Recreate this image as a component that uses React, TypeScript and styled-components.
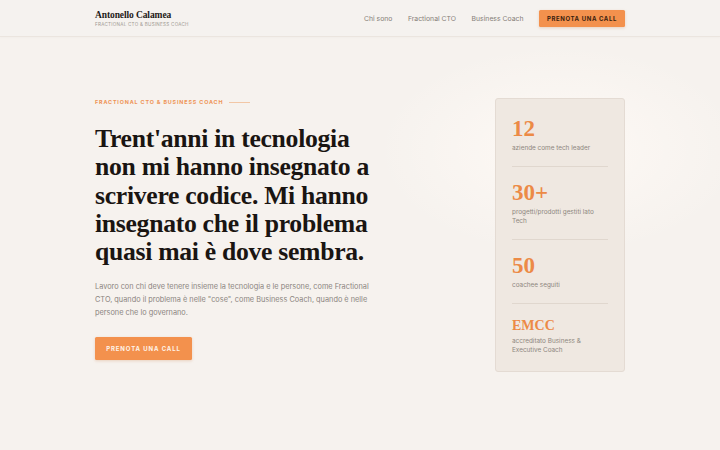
import React from "react";
import styled, { createGlobalStyle } from "styled-components";

const GlobalStyle = createGlobalStyle`
  html, body {
    margin: 0;
    padding: 0;
    background: #f6f2ee;
  }
  body {
    font-family: "Inter", "Liberation Sans", sans-serif;
    -webkit-font-smoothing: antialiased;
  }
`;

const Page = styled.div`
  width: 720px;
  height: 450px;
  overflow: hidden;
  background:
    radial-gradient(ellipse 260px 150px at 560px 150px, rgba(255, 250, 246, 0.9), rgba(255, 250, 246, 0) 70%),
    #f6f2ee;
`;

const NavBar = styled.header`
  height: 36px;
  border-bottom: 1px solid #ebe5df;
  background: #f5f2ef;
  box-shadow: 0 1px 2px rgba(0, 0, 0, 0.02);
`;

const Inner = styled.div`
  width: 530px;
  margin: 0 auto;
`;

const NavInner = styled(Inner)`
  height: 100%;
  display: flex;
  align-items: center;
  justify-content: space-between;
`;

const Brand = styled.div`
  display: flex;
  flex-direction: column;
  gap: 2px;
`;

const BrandName = styled.span`
  font-family: "Liberation Serif", serif;
  font-weight: 700;
  font-size: 9.5px;
  color: #1e1a17;
  letter-spacing: -0.1px;
`;

const BrandTag = styled.span`
  font-size: 4.6px;
  letter-spacing: 0.25px;
  color: #a19a93;
  text-transform: uppercase;
`;

const Links = styled.nav`
  display: flex;
  align-items: center;
  gap: 15.5px;
`;

const NavLink = styled.a`
  font-size: 6.85px;
  color: #857e78;
  text-decoration: none;
`;

const Cta = styled.a<{ $big?: boolean }>`
  display: flex;
  align-items: center;
  justify-content: center;
  background: #f3914d;
  color: ${(p) => (p.$big ? "#fff4ea" : "#3a210f")};
  font-size: 6px;
  font-weight: 700;
  letter-spacing: ${(p) => (p.$big ? "0.9px" : "0.6px")};
  text-transform: uppercase;
  text-decoration: none;
  border-radius: 1.5px;
  box-shadow: 0 1px 3px rgba(200, 110, 50, 0.25);
  width: ${(p) => (p.$big ? "97px" : "86px")};
  height: ${(p) => (p.$big ? "23px" : "17px")};
`;

const Hero = styled(Inner)`
  display: flex;
  justify-content: space-between;
  align-items: flex-start;
  padding-top: 61px;
`;

const Left = styled.div`
  display: flex;
  flex-direction: column;
  padding-top: 1px;
`;

const Eyebrow = styled.div`
  display: flex;
  align-items: center;
  gap: 6px;
  font-size: 5.4px;
  font-weight: 700;
  letter-spacing: 0.85px;
  color: #ee9457;
  text-transform: uppercase;
  &::after {
    content: "";
    width: 21px;
    height: 1px;
    background: #f2c7a6;
  }
`;

const Title = styled.h1`
  margin: 20px 0 0;
  font-family: "Liberation Serif", serif;
  font-weight: 700;
  font-size: 25.7px;
  line-height: 28.3px;
  letter-spacing: -0.3px;
  color: #1a1512;
`;

const Lead = styled.p`
  margin: 14px 0 0;
  width: 290px;
  font-size: 7.35px;
  line-height: 13px;
  color: #8b847e;
`;

const LeadButton = styled.div`
  margin-top: 18px;
`;

const StatsCard = styled.aside`
  width: 130px;
  box-sizing: border-box;
  padding: 18px 16px 16px;
  background: #efe8e1;
  border: 1px solid #e4dbd3;
  border-radius: 3px;
`;

const Stat = styled.div<{ $last?: boolean }>`
  padding: ${(p) => (p.$last ? "14px 0 0" : "0 0 13px")};
  & + & {
    border-top: 1px solid #e0d7ce;
    padding-top: ${(p) => (p.$last ? "14px" : "19px")};
  }
`;

const Value = styled.div<{ $small?: boolean }>`
  font-family: "Liberation Serif", serif;
  font-size: ${(p) => (p.$small ? "14px" : "23px")};
  font-weight: 700;
  line-height: ${(p) => (p.$small ? "16px" : "24px")};
  color: #ec8a46;
`;

const Label = styled.div`
  margin-top: 3px;
  font-size: 6.4px;
  line-height: 9px;
  color: #8e8780;
  width: 96px;
`;

const stats = [
  { value: "12", label: "aziende come tech leader" },
  { value: "30+", label: "progetti/prodotti gestiti lato Tech" },
  { value: "50", label: "coachee seguiti" },
  { value: "EMCC", label: "accreditato Business & Executive Coach", small: true },
];

const App: React.FC = () => {
  return (
    <Page>
      <GlobalStyle />
      <NavBar>
        <NavInner>
          <Brand>
            <BrandName>Antonello Calamea</BrandName>
            <BrandTag>Fractional CTO &amp; Business Coach</BrandTag>
          </Brand>
          <Links>
            <NavLink href="#chi">Chi sono</NavLink>
            <NavLink href="#cto">Fractional CTO</NavLink>
            <NavLink href="#coach">Business Coach</NavLink>
            <Cta href="#call">Prenota una call</Cta>
          </Links>
        </NavInner>
      </NavBar>

      <Hero>
        <Left>
          <Eyebrow>Fractional CTO &amp; Business Coach</Eyebrow>
          <Title>
            Trent'anni in tecnologia
            <br />
            non mi hanno insegnato a
            <br />
            scrivere codice. Mi hanno
            <br />
            insegnato che il problema
            <br />
            quasi mai è dove sembra.
          </Title>
          <Lead>
            Lavoro con chi deve tenere insieme la tecnologia e le persone, come Fractional
            CTO, quando il problema è nelle "cose", come Business Coach, quando è nelle
            persone che lo governano.
          </Lead>
          <LeadButton>
            <Cta $big href="#call">Prenota una call</Cta>
          </LeadButton>
        </Left>

        <StatsCard>
          {stats.map((s, i) => (
            <Stat key={s.value} $last={i === stats.length - 1}>
              <Value $small={s.small}>{s.value}</Value>
              <Label>{s.label}</Label>
            </Stat>
          ))}
        </StatsCard>
      </Hero>
    </Page>
  );
};

export default App;
